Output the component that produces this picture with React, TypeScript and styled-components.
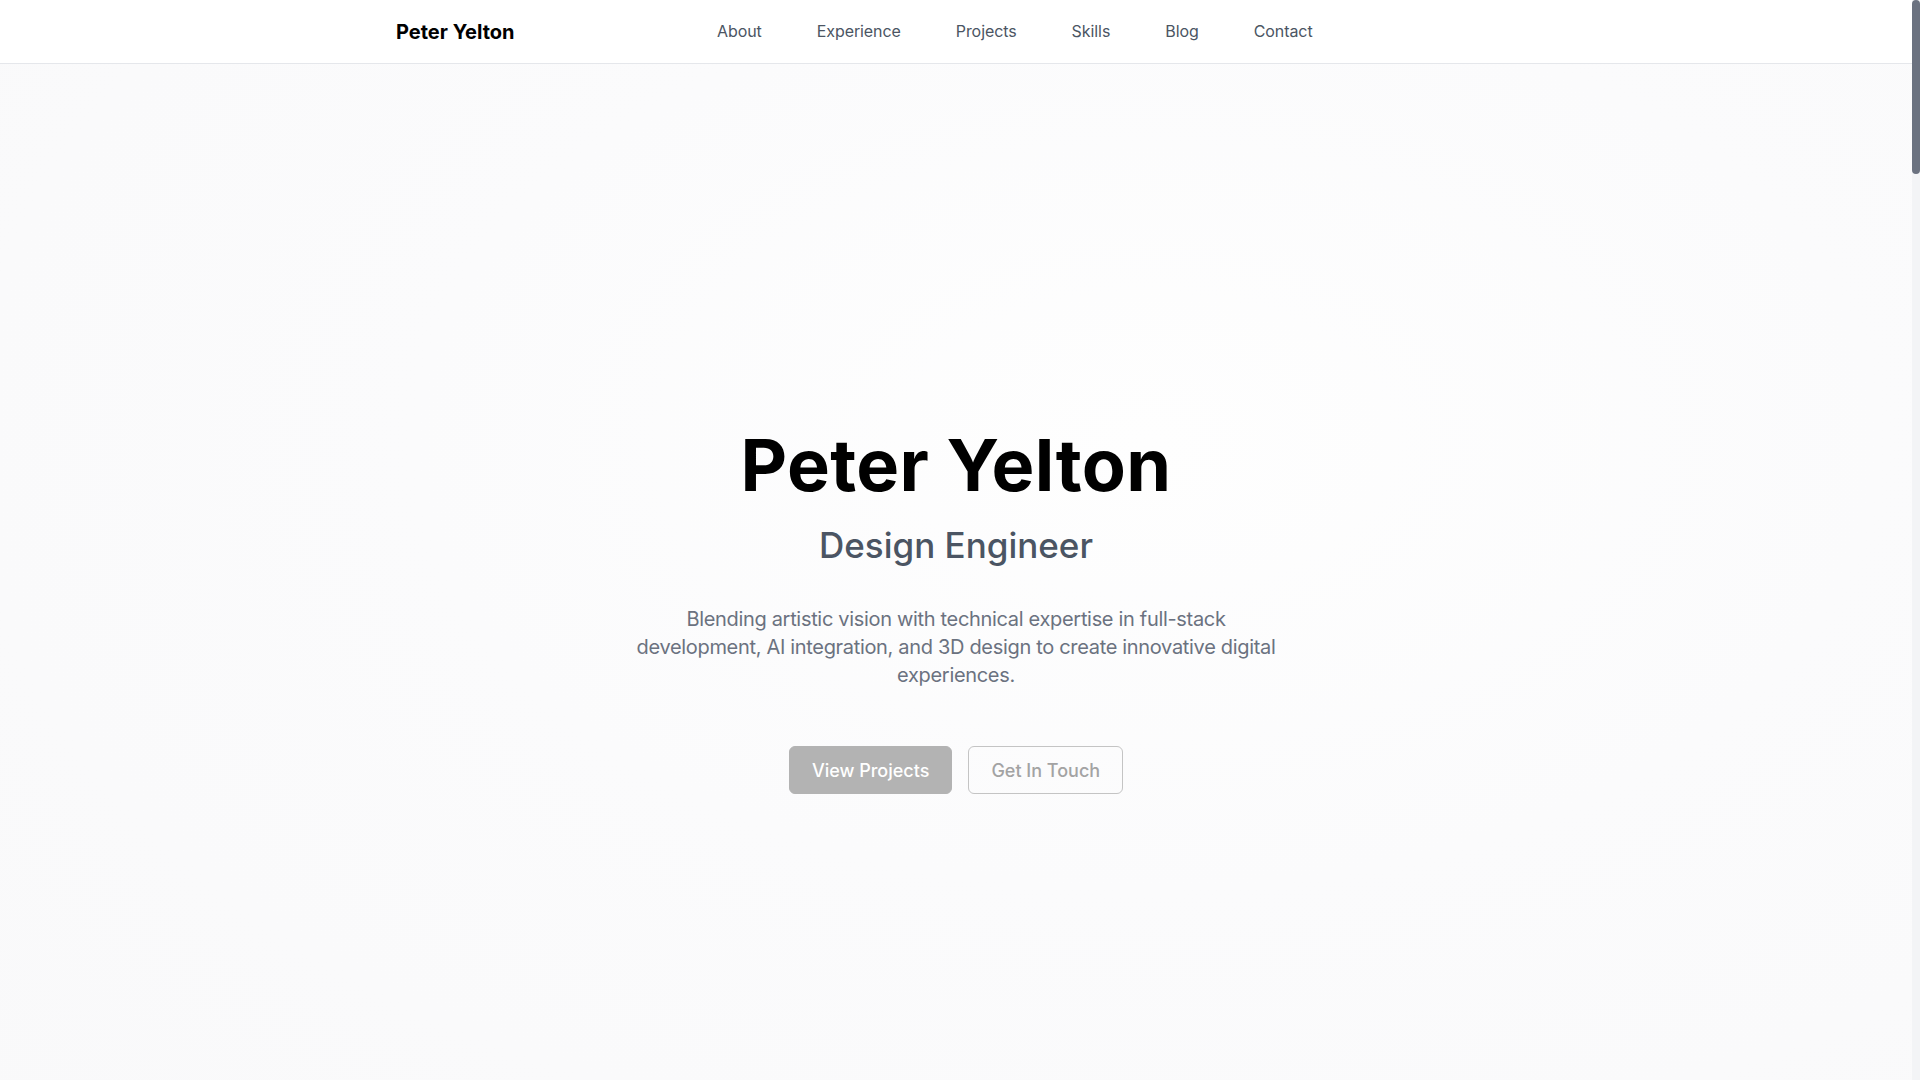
import styled, { createGlobalStyle } from "styled-components";

const GlobalStyle = createGlobalStyle`
  *, *::before, *::after {
    box-sizing: border-box;
  }

  html, body {
    margin: 0;
    padding: 0;
  }

  body {
    font-family: Inter, "Noto Sans", "Liberation Sans", sans-serif;
    color: #000;
    background: #fafafa;
    -webkit-font-smoothing: antialiased;
  }
`

const navItems = ["About", "Experience", "Projects", "Skills", "Blog", "Contact"];

const Header = () => {
    return (
        <StyledHeader>
            <HeaderInner>
                <Logo href="#Home">Peter Yelton</Logo>
                <Nav>
                    {navItems.map(item => (
                        <NavLink key={item} href={`#${item.toLowerCase()}`}>{item}</NavLink>
                    ))}
                </Nav>
                <HeaderActions/>
            </HeaderInner>
        </StyledHeader>
    )
}

const Hero = () => {
    return (
        <StyledHero id="Home">
            <HeroContent>
                <Title>Peter Yelton</Title>
                <Subtitle>Design Engineer</Subtitle>
                <Description>
                    Blending artistic vision with technical expertise in full-stack development, AI integration,
                    and 3D design to create innovative digital experiences.
                </Description>
                <Buttons>
                    <Button variant="solid">View Projects</Button>
                    <Button variant="outline">Get In Touch</Button>
                </Buttons>
            </HeroContent>
        </StyledHero>
    )
}

// полоса прокрутки страницы, как в браузере
const PageScrollbar = () => {
    return (
        <ScrollTrack>
            <ScrollThumb/>
        </ScrollTrack>
    )
}

export default function App() {
    return (
        <>
            <GlobalStyle/>
            <Page>
                <Header/>
                <main>
                    <Hero/>
                </main>
            </Page>
            <PageScrollbar/>
        </>
    )
}

const Page = styled.div`
  margin-right: 8px;
`

const StyledHeader = styled.header`
  position: sticky;
  top: 0;
  z-index: 10;
  height: 64px;
  background: #ffffff;
  border-bottom: 1px solid #e5e7eb;
`

const HeaderInner = styled.div`
  display: flex;
  align-items: center;
  justify-content: space-between;
  max-width: 1152px;
  height: 100%;
  margin: 0 auto;
  padding: 0 16px;
`

const Logo = styled.a`
  font-size: 20px;
  font-weight: 700;
  line-height: 28px;
  color: #000;
  text-decoration: none;
`

const Nav = styled.nav`
  display: flex;
  align-items: center;
  gap: 31px;
`

const NavLink = styled.a`
  padding: 6px 12px 8px;
  font-size: 16px;
  line-height: 24px;
  letter-spacing: -0.005em;
  color: #4b5563;
  text-decoration: none;
`

const HeaderActions = styled.div`
  width: 1px;
`

const StyledHero = styled.section`
  display: flex;
  align-items: center;
  justify-content: center;
  min-height: 1080px;
  padding: 15px 16px 0;
  background: radial-gradient(ellipse at 60% 35%, #fefefe 0%, #fbfbfc 45%, #f9f9fa 100%);
`

const HeroContent = styled.div`
  display: flex;
  flex-direction: column;
  align-items: center;
  text-align: center;
`

const Title = styled.h1`
  margin: 0 0 24px;
  font-size: 72px;
  font-weight: 700;
  line-height: 1;
  letter-spacing: 0.005em;
  color: #000;
`

const Subtitle = styled.h2`
  margin: 0 0 40px;
  font-size: 35px;
  font-weight: 500;
  line-height: 40px;
  color: #4b5563;
`

const Description = styled.p`
  max-width: 656px;
  margin: 0 0 57px;
  font-size: 20px;
  line-height: 28px;
  letter-spacing: -0.016em;
  color: #6b7280;
`

const Buttons = styled.div`
  display: flex;
  gap: 16px;
`

const Button = styled.button<{ variant: "solid" | "outline" }>`
  height: 48px;
  padding: 0 22px;
  border-radius: 6px;
  font-family: inherit;
  font-size: 18px;
  font-weight: 500;
  cursor: pointer;
  border: 1px solid ${props => props.variant === "solid" ? "#b3b3b3" : "#c4c4c4"};
  background: ${props => props.variant === "solid" ? "#b3b3b3" : "transparent"};
  color: ${props => props.variant === "solid" ? "#ffffff" : "#a3a3a3"};
`

const ScrollTrack = styled.div`
  position: fixed;
  top: 0;
  right: 0;
  z-index: 20;
  width: 8px;
  height: 100vh;
  background: #f3f4f6;
`

const ScrollThumb = styled.div`
  width: 100%;
  height: 174px;
  border-radius: 4px;
  background: #6b7280;
`
